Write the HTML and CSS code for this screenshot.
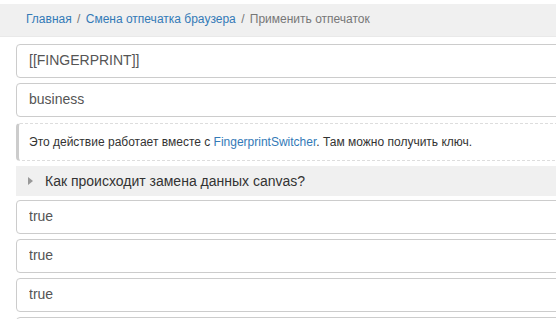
FILE: index.html
```html
<!DOCTYPE html>
<html lang="ru">
  <head>
    <meta charset="UTF-8" />
    <meta name="viewport" content="width=device-width, initial-scale=1.0" />
    <title>Применить отпечаток</title>
    <link rel="stylesheet" href="styles.css">
  </head>
  <body>
    <div class="breadcrumb">
      <a href="#">Главная</a>
      <span class="sep">/</span>
      <a href="#">Смена отпечатка браузера</a>
      <span class="sep">/</span>
      <span class="active">Применить отпечаток</span>
    </div>

    <div class="form">
      <input class="field" type="text" value="[[FINGERPRINT]]" />
      <input class="field" type="text" value="business" />

      <div class="note">
        Это действие работает вместе с <a href="#">FingerprintSwitcher</a>. Там можно получить ключ.
      </div>

      <details class="faq">
        <summary>Как происходит замена данных canvas?</summary>
      </details>

      <input class="field" type="text" value="true" />
      <input class="field" type="text" value="true" />
      <input class="field" type="text" value="true" />
      <input class="field" type="text" value="true" />
    </div>
  </body>
</html>
```

FILE: styles.css
```css
html,
body {
  margin: 0;
  overflow: hidden;
}

body {
  font-family: "Liberation Sans", Arial, sans-serif;
  color: #333;
  background: #fff;
}

a {
  color: #337ab7;
  text-decoration: none;
}

.breadcrumb {
  margin-top: 4px;
  height: 32px;
  line-height: 31px;
  padding-left: 26px;
  background-color: #f0f0f0;
  border-bottom: 1px solid #e9e9e9;
  font-size: 12px;
  white-space: nowrap;
}

.breadcrumb .sep {
  color: #777;
  padding: 0 2px;
}

.breadcrumb .active {
  color: #777;
}

.form {
  display: flex;
  flex-direction: column;
  margin: 7px 0 0 16px;
  width: 580px;
}

.field {
  box-sizing: border-box;
  height: 34px;
  margin-bottom: 5px;
  padding: 5px 12px 7px;
  border: 1px solid #ccc;
  border-radius: 4px;
  font-family: inherit;
  font-size: 14px;
  color: #555;
  background: #fff;
}

.note {
  margin: 1px 0 5px;
  padding: 10px 12px 10px 10px;
  border: 1px dashed #ddd;
  border-left: 3px solid #ccc;
  border-right: none;
  border-radius: 4px 0 0 4px;
  font-size: 12px;
  line-height: 16px;
  color: #333;
}

.faq {
  margin-bottom: 4px;
  background-color: #f0f0f0;
}

.faq summary {
  height: 30px;
  line-height: 30px;
  padding-left: 12px;
  font-size: 14px;
  color: #333;
  list-style: none;
  cursor: pointer;
}

.faq summary::before {
  content: "";
  display: inline-block;
  width: 0;
  height: 0;
  margin-right: 12px;
  border-left: 5px solid #999;
  border-top: 4px solid transparent;
  border-bottom: 4px solid transparent;
  vertical-align: 1px;
}
```
